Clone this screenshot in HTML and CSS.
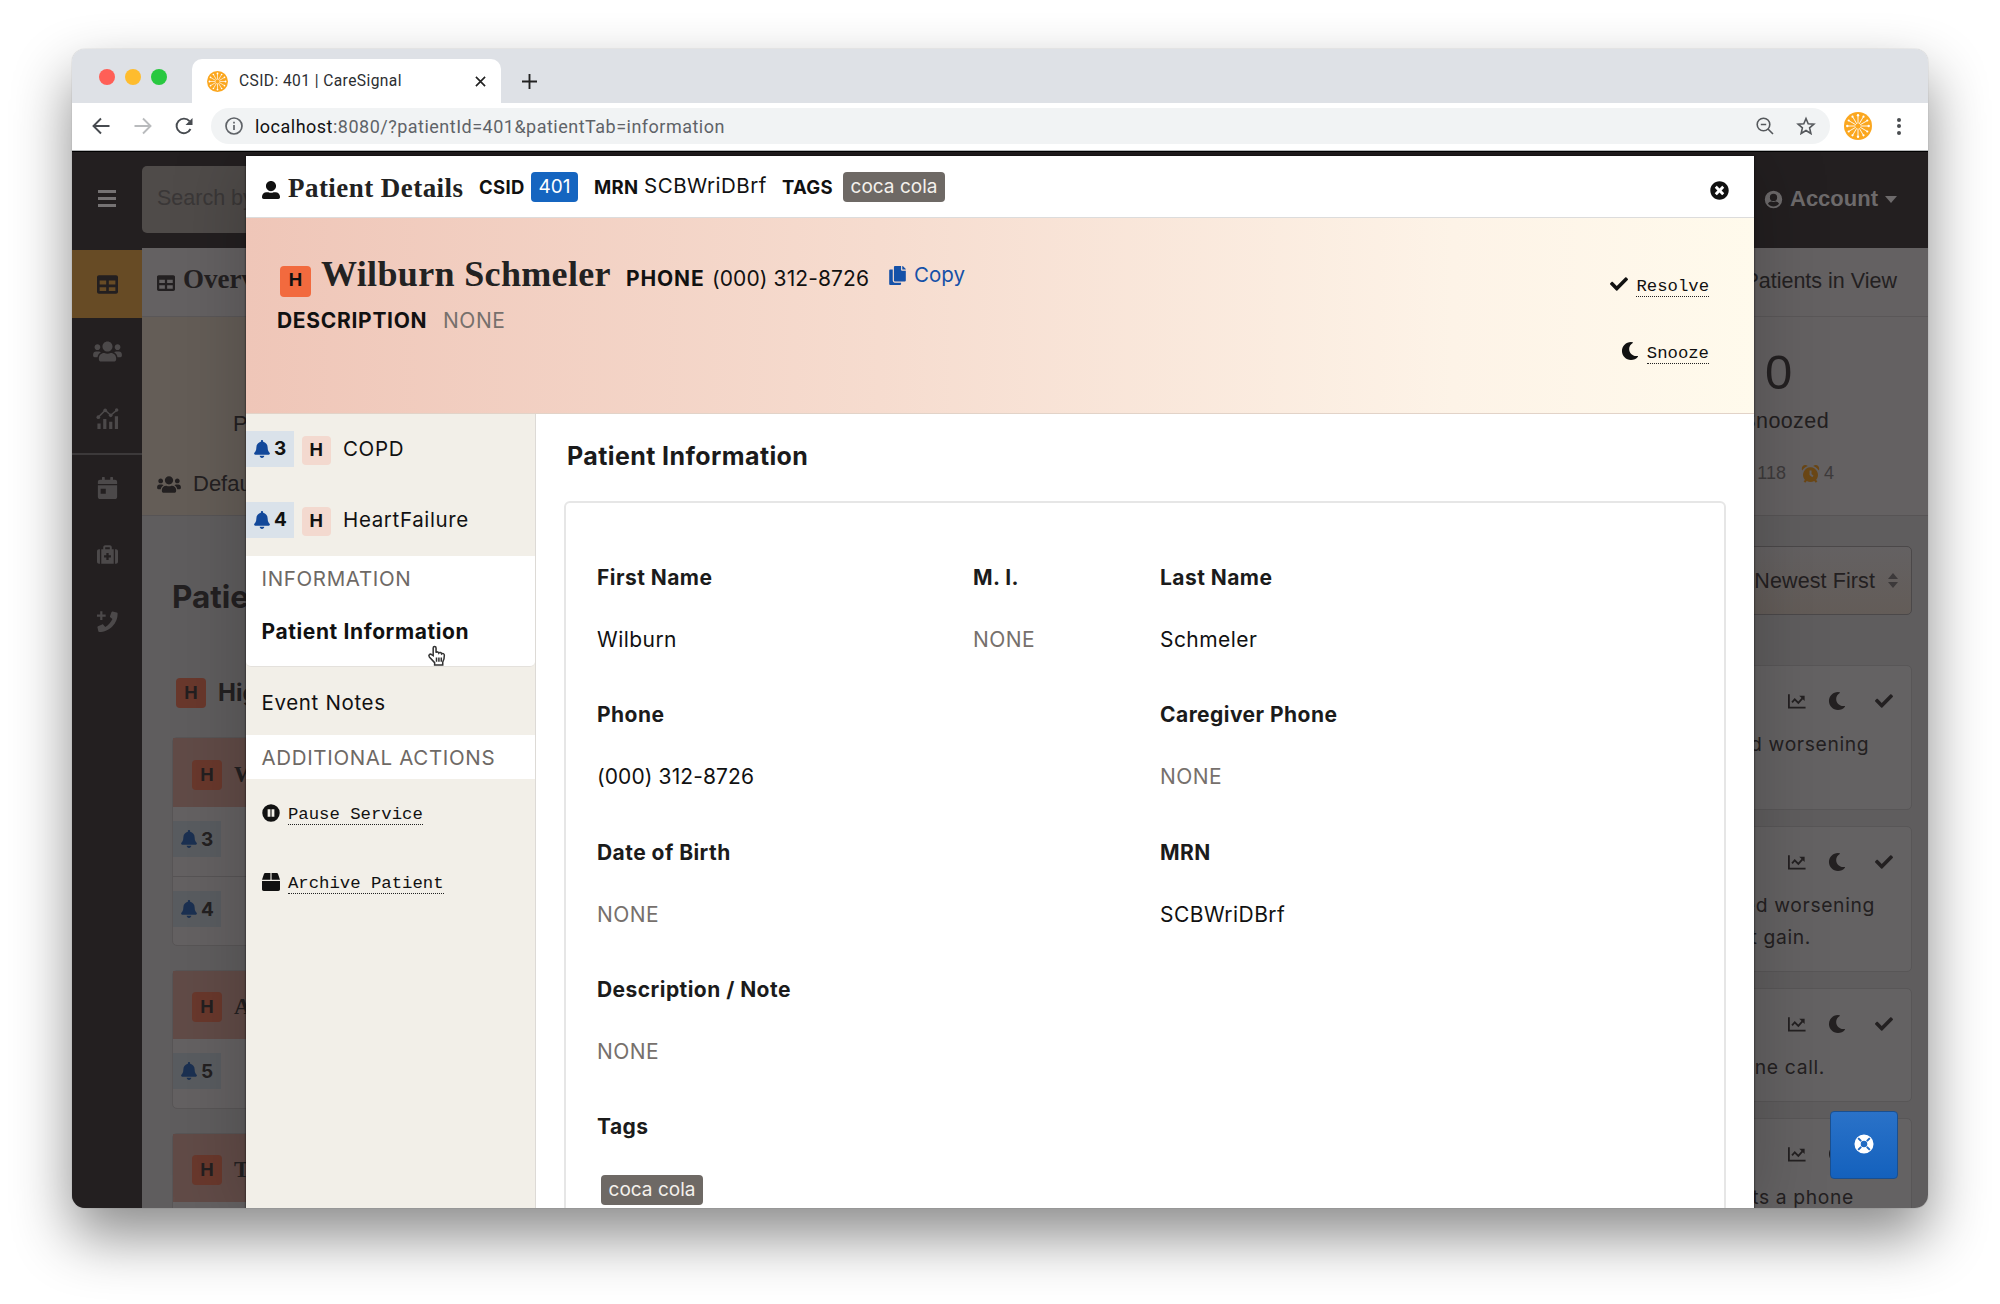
FILE: index.html
```html
<!DOCTYPE html>
<html lang="en">
<head>
  <meta charset="UTF-8" />
  <meta name="viewport" content="width=device-width, initial-scale=1.0"/>
  <title>CSID: 401 | CareSignal</title>
  <link rel="stylesheet" href="styles.css">
</head>
<body>
  <!-- Icon sprite -->
  <svg class="sprite" width="0" height="0">
    <symbol id="moon" viewBox="0 0 512 512"><path d="M283.211 512c78.962 0 151.079-35.925 198.857-94.792 7.068-8.708-.639-21.43-11.562-19.35-124.203 23.654-238.262-71.576-238.262-196.954 0-72.222 38.662-138.635 101.498-174.394 9.686-5.512 7.25-20.197-3.756-22.23A258.156 258.156 0 0 0 283.211 0c-141.309 0-256 114.511-256 256 0 141.309 114.511 256 256 256z"/></symbol>
    <symbol id="check" viewBox="0 0 512 512"><path d="M173.898 439.404l-166.4-166.4c-9.997-9.997-9.997-26.206 0-36.204l36.203-36.204c9.997-9.998 26.207-9.998 36.204 0L192 312.69 432.095 72.596c9.997-9.997 26.207-9.997 36.204 0l36.203 36.204c9.997 9.997 9.997 26.206 0 36.204l-294.4 294.401c-9.998 9.997-26.207 9.997-36.204-.001z"/></symbol>
    <symbol id="bell" viewBox="0 0 448 512"><path d="M224 512c35.32 0 63.97-28.65 63.97-64H160.03c0 35.35 28.65 64 63.97 64zm215.39-149.71c-19.32-20.76-55.47-51.99-55.47-154.29 0-77.7-54.48-139.9-127.94-155.16V32c0-17.67-14.32-32-31.98-32s-31.98 14.33-31.98 32v20.84C118.56 68.1 64.08 130.3 64.08 208c0 102.3-36.15 133.53-55.47 154.29-6 6.45-8.66 14.16-8.61 21.71.11 16.4 12.98 32 32.1 32h383.8c19.12 0 32-15.6 32.1-32 .05-7.55-2.61-15.27-8.61-21.71z"/></symbol>
    <symbol id="close" viewBox="0 0 512 512"><path d="M256 8C119 8 8 119 8 256s111 248 248 248 248-111 248-248S393 8 256 8zm121.6 313.1c4.7 4.7 4.7 12.3 0 17L338 377.6c-4.7 4.7-12.3 4.7-17 0L256 312l-65.1 65.6c-4.7 4.7-12.3 4.7-17 0L134.4 338c-4.7-4.7-4.7-12.3 0-17l65.6-65-65.6-65.1c-4.7-4.7-4.7-12.3 0-17l39.6-39.6c4.7-4.7 12.3-4.7 17 0l65 65.7 65.1-65.6c4.7-4.7 12.3-4.7 17 0l39.6 39.6c4.7 4.7 4.7 12.3 0 17L312 256l65.6 65.1z"/></symbol>
    <symbol id="table" viewBox="0 0 512 512"><path d="M464 32H48C21.49 32 0 53.49 0 80v352c0 26.51 21.49 48 48 48h416c26.51 0 48-21.49 48-48V80c0-26.51-21.49-48-48-48zM224 416H64v-96h160v96zm0-160H64v-96h160v96zm224 160H288v-96h160v96zm0-160H288v-96h160v96z"/></symbol>
    <symbol id="user" viewBox="0 0 512 512"><path d="M256 288c79.5 0 144-64.5 144-144S335.5 0 256 0 112 64.5 112 144s64.5 144 144 144zm128 32h-55.1c-22.2 10.2-46.9 16-72.9 16s-50.6-5.8-72.9-16H128C57.3 320 0 377.3 0 448v16c0 26.5 21.5 48 48 48h416c26.5 0 48-21.5 48-48v-16c0-70.7-57.3-128-128-128z"/></symbol>
    <symbol id="copy" viewBox="0 0 448 512"><path d="M320 448v40c0 13.255-10.745 24-24 24H24c-13.255 0-24-10.745-24-24V120c0-13.255 10.745-24 24-24h72v296c0 30.879 25.121 56 56 56h168zm0-344V0H152c-13.255 0-24 10.745-24 24v368c0 13.255 10.745 24 24 24h272c13.255 0 24-10.745 24-24V128H344c-13.2 0-24-10.8-24-24zm120.971-31.029L375.029 7.029A24 24 0 0 0 358.059 0H352v96h96v-6.059a24 24 0 0 0-7.029-16.97z"/></symbol>
    <symbol id="pause" viewBox="0 0 512 512"><path fill-rule="evenodd" d="M256 8a248 248 0 1 0 0 496a248 248 0 1 0 0-496zM160 150h80v212h-80zM272 150h80v212h-80z"/></symbol>
    <symbol id="box" viewBox="0 0 512 512"><path d="M509.5 184.6L458.9 32.8C452.4 13.2 434.1 0 413.4 0H272v192h238.7c-.4-2.5-.4-5-1.2-7.4zM240 0H98.6c-20.7 0-39 13.2-45.5 32.8L2.5 184.6c-.8 2.4-.8 4.9-1.2 7.4H240V0zM0 224v240c0 26.5 21.5 48 48 48h416c26.5 0 48-21.5 48-48V224H0z"/></symbol>
    <symbol id="users" viewBox="0 0 640 512"><path d="M96 224c35.3 0 64-28.7 64-64s-28.7-64-64-64-64 28.7-64 64 28.7 64 64 64zm448 0c35.3 0 64-28.7 64-64s-28.7-64-64-64-64 28.7-64 64 28.7 64 64 64zm32 32h-64c-17.6 0-33.5 7.1-45.1 18.6 40.3 22.1 68.9 62 75.1 109.4h66c17.7 0 32-14.3 32-32v-32c0-35.3-28.7-64-64-64zm-256 0c61.9 0 112-50.1 112-112S381.9 32 320 32 208 82.1 208 144s50.1 112 112 112zm76.8 32h-8.3c-20.8 10-43.9 16-68.5 16s-47.6-6-68.5-16h-8.3C179.6 288 128 339.6 128 403.2V432c0 26.5 21.5 48 48 48h288c26.5 0 48-21.5 48-48v-28.8c0-63.6-51.6-115.2-115.2-115.2zm-223.7-13.4C161.5 263.1 145.6 256 128 256H64c-35.3 0-64 28.7-64 64v32c0 17.7 14.3 32 32 32h65.9c6.3-47.4 34.9-87.3 75.2-109.4z"/></symbol>
    <symbol id="analytics" viewBox="0 0 24 24"><path d="M1 17h3.500v6H1zM7.300 12h3.500v11H7.300zM13.800 15h3.500v8h-3.500zM20 9h3.500v14H20z"/><path d="M2 10L9.500 2.500L15.500 8L22.500 2" fill="none" stroke="currentColor" stroke-width="1.700"/><circle cx="2" cy="10" r="2"/><circle cx="9.500" cy="2.500" r="2"/><circle cx="15.500" cy="8" r="2"/><circle cx="22" cy="2.300" r="1.900"/></symbol>
    <symbol id="calendar" viewBox="0 0 448 512"><path fill-rule="evenodd" d="M0 464c0 26.500 21.500 48 48 48h352c26.500 0 48-21.500 48-48V192H0zM64 272h120v120H64zM400 64h-48V12a12 12 0 0 0-12-12h-40a12 12 0 0 0-12 12v52H160V12a12 12 0 0 0-12-12h-40a12 12 0 0 0-12 12v52H48c-26.500 0-48 21.500-48 48v48h448v-48c0-26.500-21.500-48-48-48z"/></symbol>
    <symbol id="medkit" viewBox="0 0 512 512"><path fill-rule="evenodd" d="M104 128h48V80c0-26 22-48 48-48h112c26 0 48 22 48 48v48h48v352H104zM200 128h112V80H200zM228 220v56h-56v56h56v56h56v-56h56v-56h-56v-56zM48 128h24v352H48c-26 0-48-22-48-48V176c0-26 22-48 48-48zM440 128h24c26 0 48 22 48 48v256c0 26-22 48-48 48h-24z"/></symbol>
    <symbol id="callplus" viewBox="0 0 24 24"><path d="M22 1.500L17.600.6c-.6-.1-1 .1-1.200.6l-1.700 4.400c-.2.500-.1.900.3 1.200l2.400 1.900C15.800 12.300 13 15.300 9.600 17.400l-2.200-2.500c-.3-.4-.7-.5-1.200-.3L1.600 16.600c-.5.2-.7.600-.6 1.100l1 4.500c.1.500.5.800 1 .8C14 23 23.500 13.500 23 2.500c0-.5-.4-.9-1-1z"/><path d="M.5 5h9.500M5.250.2v9.600" stroke="currentColor" stroke-width="2.400"/></symbol>
    <symbol id="account" viewBox="0 0 24 24"><path fill-rule="evenodd" d="M12 1a11 11 0 1 0 0 22a11 11 0 1 0 0-22zM12 4.800a4.600 4.600 0 1 1 0 9.200a4.600 4.600 0 0 1 0-9.200zM5 17.500c1-1.900 2.700-2.900 4.200-2.900c1.900.8 3.700.8 5.600 0c1.500 0 3.200 1 4.200 2.900c-3.600 4.400-10.400 4.400-14 0z"/></symbol>
    <symbol id="clock" viewBox="0 0 24 24"><path fill-rule="evenodd" d="M12 3.500a9.700 9.700 0 0 1 7 16l1.700 1.800l-2 1.700l-2-2.100a9.700 9.700 0 0 1-9.400 0l-2 2.100l-2-1.700L5 19.500A9.700 9.700 0 0 1 12 3.500zM10.800 7.500v5.700l3.500 3l1.600-1.900l-2.600-2.200V7.500z"/><path d="M1.600 7.500C-.8 3 4.600-1.600 8.600 2C5.700 3 3.300 4.900 1.600 7.500zM22.400 7.500C24.800 3 19.400-1.600 15.400 2c2.900 1 5.300 2.900 7 5.500z"/></symbol>
    <symbol id="chart" viewBox="0 0 20 16"><path d="M1 0v14.700h18.500" fill="none" stroke="currentColor" stroke-width="2"/><path d="M4.500 9l3-3.500l4 4L16 4.500" fill="none" stroke="currentColor" stroke-width="2"/><path d="M12.500 1.500h6v6z"/></symbol>
    <symbol id="lifering" viewBox="0 0 24 24"><circle cx="12" cy="12" r="7.700" fill="none" stroke="#fff" stroke-width="7.500"/><path d="M5 5l3.600 3.600M19 5l-3.600 3.600M5 19l3.600-3.600M19 19l-3.600-3.600" stroke="#2068c0" stroke-width="2.400"/></symbol>
    <symbol id="logo" viewBox="0 0 28 28"><circle cx="14" cy="14" r="14" fill="#fba71f"/><g stroke="#fff" stroke-width="0.9" fill="none">
      <path d="M14 3v22M3 14h22M8.500 4.500l11 19M19.500 4.500l-11 19M4.500 8.500l19 11M23.500 8.500l-19 11"/></g>
      <g fill="#fff"><circle cx="14" cy="3.300" r="1.200"/><circle cx="14" cy="24.700" r="1.200"/><circle cx="3.300" cy="14" r="1.200"/><circle cx="24.700" cy="14" r="1.200"/><circle cx="8.500" cy="4.700" r="1.100"/><circle cx="19.500" cy="4.700" r="1.100"/><circle cx="8.500" cy="23.300" r="1.100"/><circle cx="19.500" cy="23.300" r="1.100"/><circle cx="4.700" cy="8.500" r="1.100"/><circle cx="23.300" cy="8.500" r="1.100"/><circle cx="4.700" cy="19.500" r="1.100"/><circle cx="23.300" cy="19.500" r="1.100"/></g><circle cx="14" cy="14" r="2.600" fill="#fba71f"/></symbol>
  </svg>

  <div class="window">
    <!-- Browser chrome -->
    <div class="tabstrip">
      <div class="lights"><i class="red"></i><i class="yellow"></i><i class="green"></i></div>
      <div class="tab">
        <svg class="favicon"><use href="#logo"/></svg>
        <span>CSID: 401 | CareSignal</span>
        <svg class="tab-close" viewBox="0 0 12 12"><path d="M1 1l10 10M11 1L1 11"/></svg>
      </div>
      <svg class="tab-new" viewBox="0 0 16 16"><path d="M8 0v16M0 8h16"/></svg>
    </div>
    <div class="toolbar">
      <svg class="nav-icon" viewBox="0 0 18 18"><path d="M17.500 9H2M9 1.500L1.500 9L9 16.500"/></svg>
      <svg class="nav-icon faded" viewBox="0 0 18 18"><path d="M.5 9H16M9 1.500L16.500 9L9 16.500"/></svg>
      <svg class="nav-icon" viewBox="0 0 18 18"><path d="M15.500 12A7.300 7.300 0 1 1 14.500 4.200"/><path d="M17.500 1v7h-7z" fill="#474b50" stroke="none"/></svg>
      <div class="omnibox">
        <svg class="info" viewBox="0 0 18 18"><circle cx="9" cy="9" r="8"/><path d="M9 8v5M9 4.800v1.800"/></svg>
        <span class="url">localhost<b>:8080/?patientId=401&amp;patientTab=information</b></span>
        <svg class="omni-icon" viewBox="0 0 18 18"><circle cx="7.500" cy="7.500" r="6.300"/><path d="M12 12l5 5M4.800 7.500h5.400"/></svg>
        <svg class="omni-icon" viewBox="0 0 18 18"><path d="M9 1.500l2.200 5.200l5.700.5l-4.300 3.700l1.300 5.600L9 13.500l-4.900 3l1.300-5.600L1.100 7.200l5.700-.5z"/></svg>
      </div>
      <svg class="avatar"><use href="#logo"/></svg>
      <div class="dots"><i></i><i></i><i></i></div>
    </div>

    <div class="page">
      <!-- Dashboard behind the dialog -->
      <div class="sidebar">
        <div class="side-item side-menu"><i></i><i></i><i></i></div>
        <div class="side-item active"><svg><use href="#table"/></svg></div>
        <div class="side-item"><svg class="wide"><use href="#users"/></svg></div>
        <div class="side-item"><svg class="mid"><use href="#analytics"/></svg></div>
        <div class="side-item divided"><svg class="mid"><use href="#calendar"/></svg></div>
        <div class="side-item"><svg><use href="#medkit"/></svg></div>
        <div class="side-item"><svg class="mid"><use href="#callplus"/></svg></div>
      </div>
      <div class="dashboard">
        <div class="topbar">
          <div class="search">Search by</div>
          <div class="account"><svg><use href="#account"/></svg>Account<i class="caret"></i></div>
        </div>
        <div class="view-row">
          <h2><svg><use href="#table"/></svg>Overview</h2>
          <span>Patients in View</span>
        </div>
        <div class="stats">
          <div class="program">
            <p class="program-label">Program</p>
            <p class="program-name"><svg><use href="#users"/></svg>Default</p>
          </div>
          <div class="snoozed">
            <p class="count">0</p>
            <p class="label">Snoozed</p>
            <p class="totals">118 <svg><use href="#clock"/></svg>4</p>
          </div>
        </div>
        <div class="content">
          <div class="patients">
            <h1>Patients</h1>
            <h3><span class="risk">H</span>High</h3>
            <div class="pcard">
              <div class="pcard-head"><span class="risk">H</span>Wilburn</div>
              <div class="pcard-row"><span class="alerts"><svg><use href="#bell"/></svg>3</span></div>
              <div class="pcard-row"><span class="alerts"><svg><use href="#bell"/></svg>4</span></div>
            </div>
            <div class="pcard">
              <div class="pcard-head"><span class="risk">H</span>Arden</div>
              <div class="pcard-row"><span class="alerts"><svg><use href="#bell"/></svg>5</span></div>
            </div>
            <div class="pcard">
              <div class="pcard-head"><span class="risk">H</span>Tia</div>
              <div class="pcard-row"></div>
            </div>
          </div>
          <div class="events">
            <div class="sort">Newest First
              <svg viewBox="0 0 10 15"><path d="M5 0l5 6H0zM5 15L0 9h10z"/></svg>
            </div>
            <div class="event first">
              <div class="event-icons"><svg class="c"><use href="#chart"/></svg><svg><use href="#moon"/></svg><svg><use href="#check"/></svg></div>
              <p class="end-a">reported worsening</p>
            </div>
            <div class="event second">
              <div class="event-icons"><svg class="c"><use href="#chart"/></svg><svg><use href="#moon"/></svg><svg><use href="#check"/></svg></div>
              <p class="end-b">reported worsening</p>
              <p class="end-c">weight gain.</p>
            </div>
            <div class="event third">
              <div class="event-icons"><svg class="c"><use href="#chart"/></svg><svg><use href="#moon"/></svg><svg><use href="#check"/></svg></div>
              <p class="end-d">phone call.</p>
            </div>
            <div class="event fourth">
              <div class="event-icons"><svg class="c"><use href="#chart"/></svg><svg><use href="#moon"/></svg><svg><use href="#check"/></svg></div>
              <p class="end-e">requests a phone</p>
            </div>
          </div>
        </div>
      </div>

      <!-- Patient dialog -->
      <div class="modal">
        <div class="modal-head">
          <svg class="user"><use href="#user"/></svg>
          <h2>Patient Details</h2>
          <b class="csid">CSID</b><span class="chip blue">401</span>
          <b class="mrn">MRN</b><span class="mrn-value">SCBWriDBrf</span>
          <b class="tags">TAGS</b><span class="chip gray">coca cola</span>
          <svg class="close"><use href="#close"/></svg>
        </div>
        <div class="hero">
          <div class="hero-main">
            <div class="hero-line">
              <span class="risk">H</span>
              <h1>Wilburn Schmeler</h1>
              <b class="phone-label">PHONE</b><span class="phone">(000) 312-8726</span>
              <a class="copy"><svg><use href="#copy"/></svg>Copy</a>
            </div>
            <div class="hero-desc"><b>DESCRIPTION</b><span>NONE</span></div>
          </div>
          <div class="hero-actions">
            <a><svg><use href="#check"/></svg><span>Resolve</span></a>
            <a><svg><use href="#moon"/></svg><span>Snooze</span></a>
          </div>
        </div>
        <div class="modal-body">
          <div class="menu">
            <div class="program-item"><span class="alerts"><svg><use href="#bell"/></svg>3</span><span class="risk pale">H</span><span class="pname">COPD</span></div>
            <div class="program-item"><span class="alerts"><svg><use href="#bell"/></svg>4</span><span class="risk pale">H</span><span class="pname">HeartFailure</span></div>
            <div class="menu-title info-title">INFORMATION</div>
            <div class="menu-item selected">Patient Information</div>
            <div class="menu-item">Event Notes</div>
            <div class="menu-title more-title">ADDITIONAL ACTIONS</div>
            <a class="action"><svg><use href="#pause"/></svg><span>Pause Service</span></a>
            <a class="action"><svg><use href="#box"/></svg><span>Archive Patient</span></a>
          </div>
          <div class="detail">
            <h3>Patient Information</h3>
            <div class="info-card">
              <div class="field"><b>First Name</b><span>Wilburn</span></div>
              <div class="field"><b>M. I.</b><span class="none">NONE</span></div>
              <div class="field"><b>Last Name</b><span>Schmeler</span></div>
              <div class="field two"><b>Phone</b><span class="number">(000) 312-8726</span></div>
              <div class="field"><b>Caregiver Phone</b><span class="none">NONE</span></div>
              <div class="field two"><b>Date of Birth</b><span class="none">NONE</span></div>
              <div class="field"><b>MRN</b><span>SCBWriDBrf</span></div>
              <div class="field three"><b>Description / Note</b><span class="none">NONE</span></div>
              <div class="field three"><b>Tags</b><span class="chip gray">coca cola</span></div>
            </div>
          </div>
        </div>
      </div>

      <div class="help"><svg><use href="#lifering"/></svg></div>
      <svg class="cursor" viewBox="0 0 20 22"><path d="M6 11V3.200c0-2.200 3-2.200 3 0V8c.5-1.200 2.600-1 2.900.5c.8-1 2.600-.7 2.900.7c1-.8 2.900-.2 2.900 1.500c0 4-.5 5.300-1.700 7.300V21H7.500v-2.500L2 12.500c-1.400-2 .7-3.700 2.400-2.500z"/><path d="M9.500 13v4.500M12 13v4.500M14.500 13v4.500"/></svg>
    </div>
  </div>
</body>
</html>
```
FILE: styles.css
```css
* {
  box-sizing: border-box;
}
body {
  margin: 0;
  height: 1304px;
  overflow: hidden;
  background: #fff;
  padding: 49px 72px 0;
  font-family: Inter, "Liberation Sans", sans-serif;
  color: #111;
}
h1, h2, h3, p {
  margin: 0;
}
svg {
  fill: currentColor;
  flex: none;
  overflow: visible;
}
.sprite {
  position: absolute;
}
.window {
  width: 1856px;
  height: 1159px;
  border-radius: 13px;
  overflow: hidden;
  box-shadow: 0 0 1px rgba(0, 0, 0, 0.4), 0 28px 58px rgba(0, 0, 0, 0.46);
}

/* Browser chrome */
.tabstrip {
  height: 54px;
  background: #dee1e6;
  display: flex;
  align-items: center;
}
.lights {
  display: flex;
  gap: 10px;
  padding: 2px 0 0 27px;
  width: 120px;
}
.lights i {
  width: 16px;
  height: 16px;
  border-radius: 50%;
}
.red { background: #ff5f57; }
.yellow { background: #febc2e; }
.green { background: #28c840; }
.tab {
  align-self: flex-end;
  width: 309px;
  height: 44px;
  background: #fff;
  border-radius: 10px 10px 0 0;
  display: flex;
  align-items: center;
  padding: 0 15px;
  font: 15.6px Roboto, sans-serif;
  letter-spacing: 0.4px;
  color: #2b2e31;
}
.favicon {
  width: 21px;
  height: 21px;
  margin-right: 11px;
}
.tab-close {
  width: 11px;
  height: 11px;
  margin-left: auto;
  stroke: #222;
  stroke-width: 1.8;
}
.tab-new {
  width: 15px;
  height: 15px;
  margin: 10px 0 0 21px;
  stroke: #222;
  stroke-width: 2;
}
.toolbar {
  height: 48px;
  background: #fff;
  border-bottom: 1px solid #b5b7b8;
  display: flex;
  align-items: center;
  padding: 0 0 1px 20px;
}
.nav-icon {
  width: 18px;
  height: 18px;
  margin-right: 23.5px;
  fill: none;
  stroke: #474b50;
  stroke-width: 1.9;
}
.faded {
  stroke: #b9bbbd;
}
.nav-icon:nth-child(3) {
  margin-right: 17.5px;
}
.omnibox {
  width: 1619px;
  height: 36px;
  border-radius: 18px;
  background: #f1f3f4;
  display: flex;
  align-items: center;
  padding: 0 14.5px;
}
.info {
  width: 18px;
  height: 18px;
  fill: none;
  stroke: #5f6368;
  stroke-width: 1.7;
}
.url {
  font: 18px Roboto, sans-serif;
  letter-spacing: 0.49px;
  margin: 0 auto 0 12px;
}
.url b {
  font-weight: 400;
  color: #5f6368;
}
.omni-icon {
  width: 18px;
  height: 18px;
  margin-left: 23px;
  fill: none;
  stroke: #55585c;
  stroke-width: 1.6;
}
.avatar {
  width: 28px;
  height: 28px;
  margin-left: 14px;
}
.dots {
  margin-left: 25px;
  display: grid;
  gap: 2.5px;
}
.dots i {
  width: 4px;
  height: 4px;
  border-radius: 50%;
  background: #4a4d51;
}

/* Dashboard */
.page {
  position: relative;
  height: 1057px;
  display: flex;
  overflow: hidden;
  background: #5f5d5e;
  border-top: 1px solid #000;
}
.sidebar {
  width: 70px;
  background: #231f20;
  color: #4c494a;
}
.side-item {
  height: 67.500px;
  display: flex;
  align-items: center;
  justify-content: center;
}
.side-item svg {
  width: 21px;
  height: 21px;
}
.side-item .wide {
  width: 29px;
  height: 23px;
}
.side-item .mid {
  width: 23px;
  height: 22px;
}
.side-menu {
  height: 98px;
  flex-direction: column;
  gap: 4px;
  color: #757273;
  padding-bottom: 6px;
}
.side-menu i {
  width: 18px;
  height: 3px;
  background: currentColor;
}
.active {
  height: 68px;
  background: #674b25;
  color: #231f20;
}
.divided {
  border-top: 2px solid #3c393a;
}
.dashboard {
  flex: 1;
  color: #232021;
}
.topbar {
  height: 96px;
  background: #231f20;
  display: flex;
  justify-content: space-between;
  align-items: center;
  padding: 0 31px 2px 0;
}
.search {
  width: 400px;
  height: 67px;
  border-radius: 5px;
  background: #4f4b49;
  color: #3a3737;
  font: 21.500px/65px "Liberation Sans", sans-serif;
  padding-left: 15px;
}
.account {
  display: flex;
  align-items: center;
  font: bold 22px "Liberation Sans", sans-serif;
  color: #6d6a6b;
}
.account svg {
  width: 19px;
  height: 19px;
  margin-right: 7px;
}
.caret {
  border: 6.500px solid transparent;
  border-top: 7px solid #6d6a6b;
  border-bottom: 0;
  margin-left: 7px;
}
.view-row {
  height: 69px;
  background: #646162;
  border-bottom: 1px solid #5a5758;
  display: flex;
  align-items: center;
  justify-content: space-between;
  padding: 0 31px 2px 15px;
}
.view-row h2 {
  font: bold 27px "Liberation Serif", serif;
  display: flex;
  align-items: center;
  padding-bottom: 3px;
}
.view-row h2 svg {
  width: 18px;
  height: 18px;
  margin: 6px 8px 0 0;
}
.view-row span {
  font: 21.500px "Liberation Sans", sans-serif;
}
.stats {
  height: 199px;
  background: #646162;
  border-bottom: 1px solid #575455;
  display: flex;
  justify-content: space-between;
}
.program {
  width: 500px;
  background: #645d57;
  font: 22px "Liberation Sans", sans-serif;
}
.program-label {
  padding: 94px 0 0 91px;
}
.program-name {
  display: flex;
  align-items: center;
  padding: 34px 0 0 15px;
}
.program-name svg {
  width: 24px;
  height: 19px;
  margin-right: 12px;
}
.snoozed {
  width: 200px;
  font: 21.500px "Liberation Sans", sans-serif;
}
.count {
  font-size: 49px;
  padding: 29px 0 0 37px;
  line-height: 52px;
}
.label {
  padding: 8px 99px 0 0;
  text-align: right;
  line-height: 30px;
  letter-spacing: 0.4px;
}
.totals {
  display: flex;
  align-items: center;
  justify-content: flex-end;
  padding: 27px 94px 0 0;
  color: #3d3a3b;
  font-size: 18px;
  white-space: pre;
}
.totals svg {
  width: 19px;
  height: 20px;
  color: #6b4715;
  margin: 0 4px 0 10px;
}
.content {
  display: flex;
  justify-content: space-between;
}
.patients {
  width: 500px;
  padding: 59px 0 0 30px;
}
.patients h1 {
  font-size: 31.500px;
  line-height: 44px;
}
.patients h3 {
  font-size: 24px;
  line-height: 30px;
  margin-top: 58px;
  display: flex;
  align-items: center;
  gap: 12px;
  padding: 1px 0 0 4px;
}
.risk {
  width: 30px;
  height: 30px;
  border-radius: 4px;
  background: #f26a3e;
  font: bold 18px/29px Inter, sans-serif;
  text-align: center;
  flex: none;
}
.patients .risk {
  background: #69382c;
  color: #231f20;
}
.pcard {
  width: 460px;
  margin-top: 29px;
  border: 1px solid #585556;
  border-radius: 5px;
  background: #646162;
}
.pcard + .pcard {
  margin-top: 24px;
}
.pcard-head {
  height: 69px;
  background: #614b47;
  display: flex;
  align-items: center;
  gap: 12px;
  padding: 4px 0 0 19px;
  font: bold 23px "Liberation Serif", serif;
}
.pcard-row {
  height: 69px;
  padding-top: 14px;
}
.pcard-row + .pcard-row {
  border-top: 1px solid #575455;
}
.pcard + .pcard .pcard-head {
  height: 68px;
  padding-top: 3px;
}
.alerts {
  width: 48px;
  height: 36px;
  background: #dae2ea;
  display: flex;
  align-items: center;
  gap: 4px;
  padding-left: 8px;
  font: bold 19px Inter, sans-serif;
}
.alerts svg {
  width: 16px;
  height: 18px;
  color: #12489a;
}
.patients .alerts {
  background: #595c60;
}
.patients .alerts svg {
  color: #1b3051;
}
.events {
  width: 250px;
  padding: 30px 16px 0 0;
  font-size: 19.3px;
  letter-spacing: 0.65px;
}
.sort {
  height: 69px;
  border: 1px solid #4b4849;
  border-radius: 5px;
  background: linear-gradient(#646162, #635c58);
  font: 21.500px/66px "Liberation Sans", sans-serif;
  letter-spacing: 0.1px;
  display: flex;
  justify-content: flex-end;
  align-items: center;
  padding-right: 13px;
}
.sort svg {
  width: 10px;
  height: 15px;
  margin-left: 13px;
  color: #3c393a;
}
.event {
  border: 1px solid #585657;
  border-radius: 5px;
  background: #646263;
  text-align: right;
  margin-top: 16px;
  padding-top: 25px;
}
.event p {
  line-height: 32px;
  white-space: nowrap;
}
.event-icons {
  height: 20px;
  display: flex;
  align-items: center;
  justify-content: flex-end;
  padding-right: 18px;
  margin-bottom: 17px;
}
.event-icons svg {
  width: 18px;
  height: 18px;
}
.event-icons .c {
  height: 15px;
}
.event-icons svg + svg {
  margin-left: 22px;
}
.event-icons svg:last-child {
  margin-left: 29px;
}
.first { height: 145px; margin-top: 50px; }
.second { height: 146px; }
.third { height: 114px; }
.fourth { height: 150px; }
.end-a { padding-right: 45px; }
.end-b { padding-right: 36px; }
.end-c { padding-right: 100px; }
.end-d { padding-right: 86px; }
.end-e { padding-right: 57px; }

/* Patient dialog */
.modal {
  position: absolute;
  left: 174px;
  top: 4px;
  width: 1508px;
  height: 1060px;
  background: #fff;
  box-shadow: 0 0 2px rgba(0, 0, 0, 0.8), 0 0 70px rgba(0, 0, 0, 0.22);
}
.modal-head {
  height: 62px;
  display: flex;
  align-items: center;
  padding: 0 25px 0 16px;
  border-bottom: 1px solid #dcdcdc;
  font-size: 18.500px;
}
.modal-head b {
  letter-spacing: 0.3px;
}
.user {
  width: 18px;
  height: 18px;
  margin: 6px 8px 0 0;
}
.modal-head h2 {
  font: bold 27px "Liberation Serif", serif;
  letter-spacing: 0.45px;
  color: #222;
  width: 191px;
  padding-top: 3px;
}
.csid { width: 52px; }
.mrn { width: 50px; }
.tags { width: 61px; }
.mrn-value {
  width: 138px;
  font-size: 20.500px;
  letter-spacing: 0.5px;
  padding-bottom: 3px;
}
.chip {
  height: 30px;
  border-radius: 4px;
  font-size: 19px;
  line-height: 30px;
  text-align: center;
}
.blue {
  width: 47px;
  margin-right: 16px;
  background: #1565c0;
  color: #fff;
}
.gray {
  width: 102px;
  background: #6e6965;
  color: #f4f1ec;
}
.close {
  width: 19px;
  height: 19px;
  margin: 7px 0 0 auto;
}
.hero {
  height: 196px;
  background: linear-gradient(90deg, #efc6b8, #f6dccf 42%, #fdf3e7 80%, #fffaec);
  border-bottom: 1px solid #e2d3c8;
  display: flex;
  justify-content: space-between;
  padding: 0 45px 0 31px;
}
.hero-main {
  padding-top: 35px;
  font-size: 21px;
}
.hero-line {
  display: flex;
  align-items: baseline;
  height: 48px;
}
.hero .risk {
  width: 31px;
  height: 31px;
  margin: 0 10px 0 3px;
  line-height: 28px;
}
.hero h1 {
  font: bold 36px "Liberation Serif", serif;
  letter-spacing: 0.35px;
  color: #222;
  width: 305px;
}
.phone-label {
  width: 86px;
  letter-spacing: 0.85px;
}
.phone {
  width: 177px;
  letter-spacing: 0.1px;
}
.copy {
  display: flex;
  align-items: center;
  gap: 8px;
  color: #1551a8;
  font-size: 20.500px;
  transform: translateY(-1px);
}
.copy svg {
  width: 17px;
  height: 19px;
  margin-top: 2px;
}
.hero-desc {
  margin-top: 7px;
  display: flex;
  letter-spacing: 0.5px;
}
.hero-desc b {
  width: 166px;
  letter-spacing: 0.7px;
}
.hero-desc span, .none {
  color: #76706c;
}
.hero-actions {
  padding-top: 56px;
  display: flex;
  flex-direction: column;
  align-items: flex-end;
  gap: 44px;
}
.hero-actions a, .action {
  display: flex;
  align-items: center;
  gap: 8px;
  height: 23px;
  font: 17.300px/18px "Liberation Mono", monospace;
}
.hero-actions span, .action span {
  padding-top: 3px;
  border-bottom: 1px dotted #222;
}
.hero-actions svg, .action svg {
  width: 18px;
  height: 18px;
  margin-bottom: 3px;
}
.modal-body {
  display: flex;
  height: 802px;
}
.menu {
  width: 290px;
  background: #f2efe8;
  border-right: 1px solid #dddad6;
  font-size: 20.500px;
  letter-spacing: 0.65px;
}
.program-item {
  height: 71px;
  display: flex;
  align-items: center;
  padding-bottom: 2px;
}
.menu .risk {
  width: 29px;
  height: 29px;
  line-height: 27px;
  background: #f3d9cf;
  margin: 3px 12px 0 8px;
}
.menu .alerts {
  letter-spacing: 0;
}
.pname {
  padding-bottom: 1px;
}
.menu-title {
  background: #fff;
  padding-left: 15.500px;
  color: #6e6965;
}
.info-title {
  height: 45px;
  line-height: 45px;
}
.menu-item {
  height: 68px;
  line-height: 72px;
  padding-left: 15.500px;
}
.selected {
  height: 66px;
  line-height: 62px;
  background: #fff;
  font-size: 21px;
  font-weight: 700;
  letter-spacing: 0.6px;
  border-bottom: 1px solid #e4e1dc;
  border-radius: 0 0 5px 5px;
}
.more-title {
  height: 44px;
  line-height: 46px;
}
.action {
  height: 69px;
  padding: 1px 0 0 16px;
  letter-spacing: 0;
}
.detail {
  flex: 1;
  padding: 27px 28px 0 28px;
}
.detail h3 {
  font-size: 25px;
  line-height: 30px;
  font-weight: 650;
  letter-spacing: 0.4px;
  padding-left: 3px;
}
.info-card {
  margin-top: 30px;
  height: 900px;
  border: 2px solid #e6e6e6;
  border-radius: 6px;
  padding: 60px 30px 0 31px;
  display: grid;
  grid-template-columns: 376px 187px 1fr;
  grid-auto-rows: 137.300px;
  align-content: start;
}
.field {
  display: flex;
  flex-direction: column;
  align-items: flex-start;
  font-size: 21px;
  line-height: 30px;
  gap: 32px;
  letter-spacing: 0.45px;
}
.field b, .detail h3 {
  color: #1b1b1b;
}
.field b {
  font-weight: 650;
}
.field .number {
  letter-spacing: 0.1px;
}
.two {
  grid-column: span 2;
}
.three {
  grid-column: span 3;
}
.field .chip {
  margin: 1px 0 0 4px;
  letter-spacing: 0;
}

/* Floating help button and pointer */
.help {
  position: absolute;
  right: 30px;
  bottom: 29px;
  width: 68px;
  height: 68px;
  border: 1px solid #1a4f8f;
  border-radius: 4px;
  background: linear-gradient(#2a72c8, #1461bd);
  display: flex;
  align-items: center;
  justify-content: center;
}
.help svg {
  width: 20px;
  height: 20px;
  margin-bottom: 2px;
}
.cursor {
  position: absolute;
  left: 355px;
  top: 493px;
  width: 20px;
  height: 21px;
  fill: #fff;
  stroke: #333;
  stroke-width: 1.6;
}
```
